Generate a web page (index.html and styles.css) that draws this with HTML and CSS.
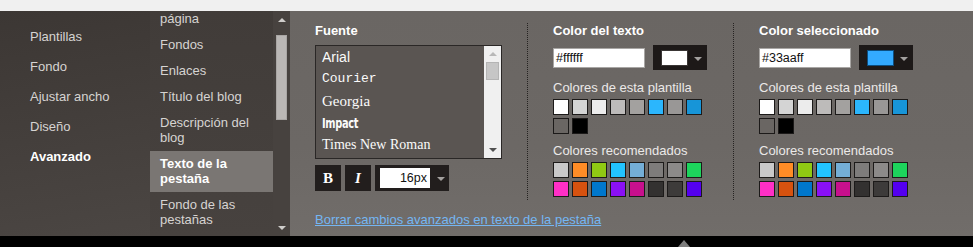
FILE: index.html
```html
<!DOCTYPE html>
<html lang="es">
<head>
<meta charset="utf-8">
<title>Diseñador de plantillas</title>
<link rel="stylesheet" href="styles.css">
</head>
<body>
<div class="topbar"></div>
<div class="main">
  <nav class="nav">
    <div class="nav-item">Plantillas</div>
    <div class="nav-item">Fondo</div>
    <div class="nav-item">Ajustar ancho</div>
    <div class="nav-item">Diseño</div>
    <div class="nav-item active">Avanzado</div>
  </nav>
  <div class="subnav">
    <div class="subnav-list">
      <div class="sub-item">Fondo de la página</div>
      <div class="sub-item">Fondos</div>
      <div class="sub-item">Enlaces</div>
      <div class="sub-item">Título del blog</div>
      <div class="sub-item">Descripción del blog</div>
      <div class="sub-item selected">Texto de la pestaña</div>
      <div class="sub-item">Fondo de las pestañas</div>
    </div>
  </div>
  <div class="vscroll">
    <div class="arrow-up"></div>
    <div class="track"><div class="thumb"></div></div>
    <div class="arrow-down"></div>
  </div>
  <section class="panel">
    <div class="cols">
      <div class="col col-font">
        <div class="heading">Fuente</div>
        <div class="listbox">
          <div class="options">
            <div class="opt f-arial">Arial</div>
            <div class="opt f-courier">Courier</div>
            <div class="opt f-georgia">Georgia</div>
            <div class="opt"><span class="f-impact">Impact</span></div>
            <div class="opt f-times">Times New Roman</div>
          </div>
          <div class="lscroll">
            <div class="l-up"></div>
            <div class="l-track"><div class="l-thumb"></div></div>
            <div class="l-down"></div>
          </div>
        </div>
        <div class="font-tools">
          <div class="tbtn tb-bold">B</div>
          <div class="tbtn tb-italic">I</div>
          <div class="size-select">
            <div class="size-input">16px</div>
            <div class="caret"></div>
          </div>
        </div>
      </div>
      <div class="col col-color">
        <div class="heading">Color del texto</div>
        <div class="picker-row">
          <div class="hex-input">#ffffff</div>
          <div class="color-btn">
            <div class="color-chip chip-white"></div>
            <div class="caret"></div>
          </div>
        </div>
        <div class="subheading">Colores de esta plantilla</div>
        <div class="swatches">
          <span class="sw c-fff"></span><span class="sw c-d4"></span><span class="sw c-ec"></span><span class="sw c-bd"></span><span class="sw c-a1"></span><span class="sw c-cyan"></span><span class="sw c-99"></span><span class="sw c-blue"></span>
          <span class="sw c-67"></span><span class="sw c-000"></span>
        </div>
        <div class="subheading sub2">Colores recomendados</div>
        <div class="swatches">
          <span class="sw r1"></span><span class="sw r2"></span><span class="sw r3"></span><span class="sw r4"></span><span class="sw r5"></span><span class="sw r6"></span><span class="sw r7"></span><span class="sw r8"></span>
          <span class="sw r9"></span><span class="sw r10"></span><span class="sw r11"></span><span class="sw r12"></span><span class="sw r13"></span><span class="sw r14"></span><span class="sw r15"></span><span class="sw r16"></span>
        </div>
      </div>
      <div class="col col-color last">
        <div class="heading">Color seleccionado</div>
        <div class="picker-row">
          <div class="hex-input">#33aaff</div>
          <div class="color-btn">
            <div class="color-chip chip-blue"></div>
            <div class="caret"></div>
          </div>
        </div>
        <div class="subheading">Colores de esta plantilla</div>
        <div class="swatches">
          <span class="sw c-fff"></span><span class="sw c-d4"></span><span class="sw c-ec"></span><span class="sw c-bd"></span><span class="sw c-a1"></span><span class="sw c-cyan"></span><span class="sw c-99"></span><span class="sw c-blue"></span>
          <span class="sw c-67"></span><span class="sw c-000"></span>
        </div>
        <div class="subheading sub2">Colores recomendados</div>
        <div class="swatches">
          <span class="sw r1"></span><span class="sw r2"></span><span class="sw r3"></span><span class="sw r4"></span><span class="sw r5"></span><span class="sw r6"></span><span class="sw r7"></span><span class="sw r8"></span>
          <span class="sw r9"></span><span class="sw r10"></span><span class="sw r11"></span><span class="sw r12"></span><span class="sw r13"></span><span class="sw r14"></span><span class="sw r15"></span><span class="sw r16"></span>
        </div>
      </div>
    </div>
    <a class="reset-link" href="#">Borrar cambios avanzados en texto de la pestaña</a>
  </section>
</div>
<div class="bottombar"><div class="bottom-arrow"></div></div>
</body>
</html>
```

FILE: styles.css
```css
* { box-sizing: border-box; }
html, body { margin: 0; padding: 0; }
body {
  width: 973px;
  height: 247px;
  overflow: hidden;
  font-family: "Liberation Sans", Arial, sans-serif;
  font-size: 13px;
  background: #000;
}
.topbar { height: 11px; background: #f0f0f0; }
.main { display: flex; height: 225px; }

.nav {
  width: 150px;
  padding-top: 11px;
  background: linear-gradient(170deg, #3c3734 0%, #45403d 60%, #4b4643 100%);
}
.nav-item {
  padding-left: 30px;
  line-height: 30px;
  color: #d6d4d2;
}
.nav-item.active { color: #fff; font-weight: bold; }

.subnav {
  width: 123px;
  overflow: hidden;
  background: linear-gradient(180deg, #413c39 0%, #47423f 100%);
}
.subnav-list { margin-top: -20px; }
.sub-item {
  padding: 5px 8px 6px 10px;
  line-height: 15px;
  color: #d6d4d2;
}
.sub-item.selected { background: #7a7673; color: #fff; font-weight: bold; }

.vscroll {
  width: 17px;
  display: flex;
  flex-direction: column;
  align-items: center;
  background: #47423f;
}
.arrow-up, .arrow-down {
  width: 0; height: 0;
  border-left: 4px solid transparent;
  border-right: 4px solid transparent;
}
.arrow-up { border-bottom: 4px solid #cfcdcb; margin-top: 7px; }
.arrow-down { border-top: 4px solid #cfcdcb; margin-bottom: 6px; }
.track { flex: 1; width: 100%; padding: 13px 3px 0 3px; }
.thumb { height: 85px; background: #bab7b5; border: 1px solid #a9a6a4; }

.panel {
  flex: 1;
  padding: 12px 0 0 25px;
  background: linear-gradient(180deg, #6a6663 0%, #6c6865 60%, #716d6a 100%);
}
.cols { display: flex; height: 177px; }
.col { border-right: 1px dotted #262322; }
.col.last { border-right: none; }
.col-font { width: 213px; padding-right: 26px; }
.col-color { width: 206px; padding: 0 26px 0 25px; }
.col-color.last { width: auto; }

.heading {
  line-height: 16px;
  font-weight: bold;
  color: #fff;
  white-space: nowrap;
}

.listbox {
  margin-top: 6px;
  width: 187px;
  height: 114px;
  display: flex;
  border: 1px solid #2a2726;
  background: #5a5552;
}
.options { flex: 1; }
.opt {
  height: 22px;
  line-height: 22px;
  padding-left: 6px;
  color: #fbfbfb;
  white-space: nowrap;
}
.f-arial { font-family: "Liberation Sans", Arial, sans-serif; font-size: 14px; }
.f-courier { font-family: "Liberation Mono", "Courier New", monospace; font-size: 13px; }
.f-georgia { font-family: Georgia, "Liberation Serif", serif; font-size: 15px; }
.f-impact {
  display: inline-block;
  font-family: Impact, "Liberation Sans Narrow", "DejaVu Sans Condensed", "DejaVu Sans", sans-serif;
  font-weight: bold;
  font-size: 14px;
  letter-spacing: -0.4px;
  transform: scaleX(0.78);
  transform-origin: left center;
}
.f-times { font-family: "Liberation Serif", "Times New Roman", serif; font-size: 14px; }

.lscroll {
  width: 17px;
  background: #f0f0f0;
  display: flex;
  flex-direction: column;
  align-items: center;
}
.l-up, .l-down {
  width: 0; height: 0;
  border-left: 4px solid transparent;
  border-right: 4px solid transparent;
}
.l-up { border-bottom: 4px solid #b8b8b8; margin-top: 6px; }
.l-down { border-top: 4px solid #505050; margin-bottom: 6px; }
.l-track { flex: 1; width: 100%; padding: 6px 2px 0 2px; }
.l-thumb { height: 18px; background: #c6c6c6; border: 1px solid #b4b4b4; }

.font-tools { display: flex; gap: 4px; margin-top: 6px; }
.tbtn {
  width: 26px;
  height: 26px;
  background: #221e1d;
  color: #fff;
  font-family: "Liberation Serif", "Times New Roman", serif;
  font-size: 15px;
  font-weight: bold;
  line-height: 26px;
  text-align: center;
}
.tb-italic { font-style: italic; }
.size-select {
  width: 74px;
  height: 26px;
  background: #221e1d;
  display: flex;
  align-items: center;
  padding-left: 5px;
}
.size-input {
  width: 50px;
  height: 20px;
  background: #fff;
  color: #111;
  font-size: 12.5px;
  line-height: 20px;
  text-align: right;
  padding-right: 3px;
}
.caret {
  width: 0; height: 0;
  border-left: 4px solid transparent;
  border-right: 4px solid transparent;
  border-top: 4px solid #a3a09e;
  margin-left: 7px;
  margin-top: 2px;
}

.picker-row { display: flex; align-items: center; gap: 8px; margin-top: 6px; height: 25px; }
.hex-input {
  width: 92px;
  height: 20px;
  background: #fff;
  border: 1px solid #a8a6a4;
  color: #111;
  font-size: 12.5px;
  line-height: 18px;
  padding-left: 2px;
}
.color-btn {
  width: 54px;
  height: 25px;
  background: #1d1918;
  display: flex;
  align-items: center;
  padding-left: 8px;
}
.color-chip { width: 27px; height: 16px; border: 1px solid #3a3635; }
.chip-white { background: #fff; }
.chip-blue { background: #33aaff; border-color: #0c4e80; }
.color-btn .caret { margin-left: 6px; }

.subheading {
  margin-top: 10px;
  line-height: 16px;
  color: #ebe9e8;
  white-space: nowrap;
}
.subheading.sub2 { margin-top: 9px; }
.swatches {
  margin-top: 3px;
  display: grid;
  grid-template-columns: repeat(8, 16px);
  grid-auto-rows: 16px;
  gap: 3px;
}
.sw { display: block; border: 1px solid #1c1a19; }
.c-fff { background: #ffffff; }
.c-d4 { background: #d4d4d4; }
.c-ec { background: #ececec; }
.c-bd { background: #bdbbba; }
.c-a1 { background: #a3a19f; }
.c-cyan { background: #2bb6fd; }
.c-99 { background: #999796; }
.c-blue { background: #1795d8; }
.c-67 { background: #6a6663; }
.c-000 { background: #000000; }
.r1 { background: #c9c9c9; }
.r2 { background: #ff8c26; }
.r3 { background: #90c913; }
.r4 { background: #22c4ff; }
.r5 { background: #74aed6; }
.r6 { background: #7e7c7b; }
.r7 { background: #8c8a89; }
.r8 { background: #1dd45c; }
.r9 { background: #ff2fc6; }
.r10 { background: #d6520f; }
.r11 { background: #0077cc; }
.r12 { background: #8a10f5; }
.r13 { background: #c8108d; }
.r14 { background: #333130; }
.r15 { background: #3d3b3a; }
.r16 { background: #5400ef; }

.reset-link {
  display: inline-block;
  margin-top: 12px;
  line-height: 15px;
  color: #74b6f3;
  text-decoration: underline;
}

.bottombar { height: 11px; background: #000; display: flex; align-items: flex-end; padding-left: 678px; }
.bottom-arrow {
  width: 0; height: 0;
  border-left: 6px solid transparent;
  border-right: 6px solid transparent;
  border-bottom: 7px solid #7c7c7c;
}
```
